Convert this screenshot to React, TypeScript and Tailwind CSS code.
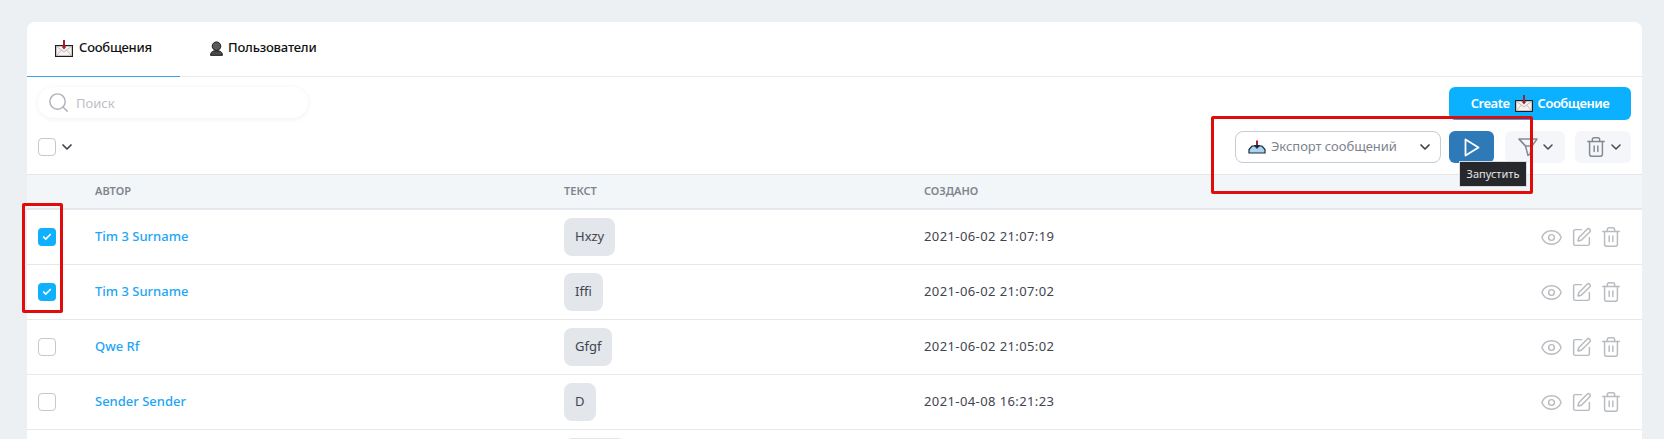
import React from 'react';
import { Check, ChevronDown, Eye, Search, SquarePen, Trash2 } from 'lucide-react';

const rows = [
  { author: 'Tim 3 Surname', text: 'Hxzy', date: '2021-06-02 21:07:19', checked: true },
  { author: 'Tim 3 Surname', text: 'Iffi', date: '2021-06-02 21:07:02', checked: true },
  { author: 'Qwe Rf', text: 'Gfgf', date: '2021-06-02 21:05:02', checked: false },
  { author: 'Sender Sender', text: 'D', date: '2021-04-08 16:21:23', checked: false },
];

const Envelope = ({ className }: { className?: string }) => (
  <svg viewBox="0 0 18 17" className={className}>
    <rect x="0.600" y="5.600" width="16.800" height="10.800" fill="#f6f2f2" stroke="#1d1d1d" strokeWidth="1.200" />
    <path d="M1 6 9 12l8-6M1 16l5.500-6M17 16l-5.500-6" fill="none" stroke="#b5b0b0" strokeWidth="0.800" />
    <path d="M9 0v7" stroke="#a81f2a" strokeWidth="2" />
    <path d="M6.500 6.500h5L9 9.500z" fill="#a81f2a" />
  </svg>
);

const Person = ({ className }: { className?: string }) => (
  <svg viewBox="0 0 14 16" className={className}>
    <circle cx="7" cy="5.500" r="4.600" fill="#5a5a5a" stroke="#111" strokeWidth="1" />
    <path d="M.6 15.400c0-2.800 1.400-4.300 3.600-4.800h5.600c2.200.5 3.600 2 3.600 4.800z" fill="#4a4a4a" stroke="#111" strokeWidth="1" />
  </svg>
);

const Tray = ({ className }: { className?: string }) => (
  <svg viewBox="0 0 18 14" className={className}>
    <path d="M1 9.500 4 6h10l3 3.500V13H1z" fill="#a9d3f2" stroke="#1c2a38" strokeWidth="1.200" />
    <path d="M9 0.500V7.500" stroke="#a3222c" strokeWidth="2" />
    <path d="M5.500 5h7L9 9z" fill="#1c2a38" />
  </svg>
);

const Funnel = ({ className }: { className?: string }) => (
  <svg viewBox="0 0 20 20" fill="none" stroke="currentColor" strokeWidth="1.500" strokeLinejoin="round" className={className}>
    <path d="M1 2h18l-5 7h-6.500z" />
    <path d="M1 2l6.500 7 2.500 9.500 2-1.500 2-8" />
  </svg>
);

const PlayOutline = ({ className }: { className?: string }) => (
  <svg viewBox="0 0 16 19" fill="none" stroke="currentColor" strokeWidth="1.800" strokeLinejoin="round" className={className}>
    <path d="M1.500 1.500 14.500 9.500 1.500 17.500z" />
  </svg>
);

const Checkbox = ({ checked }: { checked: boolean }) =>
  checked ? (
    <span className="flex h-[18px] w-[18px] items-center justify-center rounded-[4px] bg-[#0fb0fd]">
      <Check size={10} strokeWidth={4} className="text-white" />
    </span>
  ) : (
    <span className="block h-[18px] w-[18px] rounded-[4px] border border-[#c4c8cf] bg-white" />
  );

export default function App() {
  return (
    <div className="relative h-[439px] overflow-hidden bg-[#edf0f3] pl-[27px] pr-[22px] pt-[22px] font-['Noto_Sans',sans-serif] text-[#3f4550]">
      <div className="rounded-t-[8px] bg-white">
        {/* tabs */}
        <div className="flex h-[55px] border-b border-[#e8ebef]">
          <div className="mb-[-1px] flex w-[153px] items-center justify-center gap-[6px] border-b border-[#3aa3e3] pb-[2px]">
            <Envelope className="h-[17px] w-[18px]" />
            <span className="text-[13px] font-medium tracking-[-0.25px] text-[#111]">Сообщения</span>
          </div>
          <div className="flex items-center gap-[5px] pb-[2px] pl-[30px]">
            <Person className="h-[15px] w-[13px]" />
            <span className="text-[13px] font-medium tracking-[-0.2px] text-[#111]">Пользователи</span>
          </div>
        </div>

        {/* search and create */}
        <div className="flex items-start justify-between pl-[11px] pr-[11px] pt-[10px]">
          <div className="flex h-[31px] w-[270px] items-center gap-[6px] rounded-full pl-[9px] shadow-[0_1px_5px_rgba(30,40,60,0.07)]">
            <Search size={23} strokeWidth={1.500} className="text-[#b0b4b9]" />
            <span className="pt-[3px] text-[13px] text-[#bcc0c5]">Поиск</span>
          </div>
          <div className="flex h-[33px] w-[182px] items-center justify-center gap-[5px] rounded-[6px] bg-[#0bb0ff] text-[13px] font-semibold tracking-[-0.5px] text-white">
            <span>Create</span>
            <Envelope className="h-[17px] w-[18px]" />
            <span>Сообщение</span>
          </div>
        </div>

        {/* toolbar */}
        <div className="flex h-[54px] items-start justify-between pl-[11px] pr-[11px] pt-[11px]">
          <div className="flex items-center gap-[3px] pt-[7px]">
            <Checkbox checked={false} />
            <ChevronDown size={16} strokeWidth={2.600} className="text-[#3f4550]" />
          </div>
          <div className="flex items-center">
            <div className="flex h-[32px] w-[206px] items-center rounded-[8px] border border-[#c6ccd3] pl-[12px] pr-[4px]">
              <Tray className="h-[14px] w-[18px]" />
              <span className="ml-[5px] flex-1 text-[13px] tracking-[-0.05px] text-[#7d838c]">Экспорт сообщений</span>
              <ChevronDown size={16} strokeWidth={2.600} className="mr-[3px] text-[#3f4550]" />
            </div>
            <div className="ml-[8px] flex h-[32px] w-[45px] items-center justify-center rounded-[6px] bg-[#2e7ab8]">
              <PlayOutline className="h-[19px] w-[16px] text-white" />
            </div>
            <div className="ml-[11px] flex h-[32px] w-[60px] items-center justify-center gap-[2px] rounded-[6px] bg-[#f4f6f9] pl-[3px] text-[#858a92]">
              <Funnel className="h-[20px] w-[20px]" />
              <ChevronDown size={16} strokeWidth={2.400} className="text-[#4a4f57]" />
            </div>
            <div className="ml-[10px] flex h-[32px] w-[56px] items-center justify-center gap-[1px] rounded-[6px] bg-[#f4f6f9] pl-[2px] text-[#858a92]">
              <Trash2 size={22} strokeWidth={1.600} />
              <ChevronDown size={16} strokeWidth={2.400} className="text-[#4a4f57]" />
            </div>
          </div>
        </div>

        {/* table */}
        <div className="flex h-[36px] items-center border-y border-b-2 border-t-[#e4e7eb] border-b-[#e4e7eb] bg-[#f3f6f9] text-[11px] font-semibold text-[#80858c]">
          <span className="w-[537px] pl-[68px]">АВТОР</span>
          <span className="w-[360px]">ТЕКСТ</span>
          <span>СОЗДАНО</span>
        </div>
        {rows.map((row, i) => (
          <div key={i} className="flex h-[55px] items-center border-b border-[#e6e8ec] text-[13px]">
            <div className="w-[68px] pl-[11px]">
              <Checkbox checked={row.checked} />
            </div>
            <span className="w-[469px] font-medium text-[#22a5f5]">{row.author}</span>
            <div className="w-[360px]">
              <span className="inline-flex h-[38px] items-center rounded-[8px] bg-[#e3e6eb] px-[11px]">{row.text}</span>
            </div>
            <span className="flex-1 tracking-[0.4px]">{row.date}</span>
            <div className="flex items-center gap-[8px] pr-[20px] text-[#b8bcc0]">
              <Eye size={23} strokeWidth={1.500} />
              <SquarePen size={21} strokeWidth={1.700} />
              <Trash2 size={22} strokeWidth={1.600} />
            </div>
          </div>
        ))}
        <div className="pl-[537px] pt-[8px]">
          <div className="h-[38px] w-[62px] rounded-[8px] bg-[#e3e6eb]" />
        </div>
      </div>

      {/* tooltip */}
      <div className="absolute left-[1459px] top-[161px] flex h-[26px] w-[68px] items-center justify-center border border-[#d9dbde] bg-[#26282b] text-[11px] text-[#e6e6e6]">
        Запустить
      </div>

      {/* annotations */}
      <div className="absolute left-[22px] top-[203px] h-[110px] w-[41px] rounded-[2px] border-[3px] border-[#e00b0b]" />
      <div className="absolute left-[1211px] top-[116px] h-[78px] w-[322px] rounded-[2px] border-[3px] border-[#e00b0b]" />
    </div>
  );
}
